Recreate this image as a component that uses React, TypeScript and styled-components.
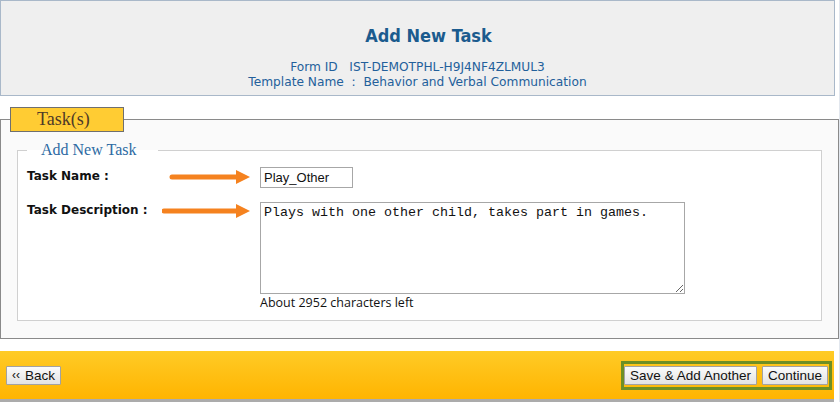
import React from "react";
import styled, { createGlobalStyle } from "styled-components";

const Global = createGlobalStyle`
  html, body { margin: 0; padding: 0; background: #ffffff; }
  #root { width: 840px; }
`;

const Page = styled.div`
  width: 840px;
  height: 402px;
  box-sizing: border-box;
  border-right: 1px solid #e2e7ee;
  overflow: hidden;
  font-family: "DejaVu Sans", Verdana, sans-serif;
`;

const Header = styled.header`
  width: 835px;
  height: 96px;
  box-sizing: border-box;
  border: 1px solid #a9b8c9;
  background: #efefef;
  display: flex;
  flex-direction: column;
  align-items: center;
  padding-top: 24px;
  color: #23609b;
  font-family: "DejaVu Sans", Verdana, sans-serif;
`;

const Title = styled.h1`
  margin: 0 0 13px 22px;
  font-size: 18px;
  line-height: 22px;
  font-weight: bold;
  color: #1b5b8e;
  font-family: "DejaVu Sans Condensed", "DejaVu Sans", sans-serif;
`;

const InfoLine = styled.div`
  font-size: 12.2px;
  line-height: 15px;
  white-space: pre;
`;

const OuterSet = styled.fieldset`
  width: 839px;
  box-sizing: border-box;
  margin: 11px 0 0 0;
  padding: 8px 16px 17px 16px;
  border: 1px solid #8a8a8a;
  background: #fafafa;
  min-width: 0;
`;

const YellowLegend = styled.legend`
  margin-left: -7px;
  padding: 0 0 0 26px;
  width: 114px;
  height: 25px;
  box-sizing: border-box;
  border: 1px solid #6f6f6f;
  background: #ffcc33;
  color: #4e3a28;
  font-family: "Liberation Serif", Georgia, serif;
  font-size: 18px;
  line-height: 23px;
`;

const InnerSet = styled.fieldset`
  margin: 0;
  padding: 7px 0 9px 9px;
  border: 1px solid #d0d0d0;
  background: #ffffff;
  min-width: 0;
`;

const BlueLegend = styled.legend`
  padding: 0 22px 0 14px;
  margin-left: 0;
  color: #2d6aa3;
  font-family: "Liberation Serif", Georgia, serif;
  font-size: 16px;
  line-height: 20px;
`;

const FieldRow = styled.div<{ $gap?: number }>`
  display: grid;
  grid-template-columns: 135px 98px auto;
  align-items: start;
  margin-top: ${(p) => p.$gap ?? 0}px;
`;

const Label = styled.label<{ $top: number }>`
  font-family: "DejaVu Sans", Verdana, sans-serif;
  font-weight: bold;
  font-size: 12px;
  color: #111;
  padding-top: ${(p) => p.$top}px;
  white-space: nowrap;
`;

const ArrowBox = styled.div<{ $top: number }>`
  padding-top: ${(p) => p.$top}px;
  line-height: 0;
`;

const TextInput = styled.input`
  width: 93px;
  height: 21px;
  box-sizing: border-box;
  border: 1px solid #a7a7a7;
  padding: 0 3px;
  margin: 0;
  font-family: "Liberation Sans", Arial, sans-serif;
  font-size: 13px;
  color: #111;
  background: #fff;
`;

const FieldStack = styled.div`
  display: flex;
  flex-direction: column;
`;

const TextArea = styled.textarea`
  width: 425px;
  height: 92px;
  box-sizing: border-box;
  border: 1px solid #a7a7a7;
  padding: 2px 3px;
  margin: 0;
  font-family: "Liberation Mono", "DejaVu Sans Mono", monospace;
  font-size: 13.33px;
  line-height: 16px;
  color: #111;
  resize: both;
  background: #fff;
`;

const Hint = styled.div`
  margin-top: 1px;
  font-family: "Open Sans", Arial, sans-serif;
  font-size: 12.5px;
  line-height: 16px;
  color: #111;
`;

const Footer = styled.footer`
  margin-top: 12px;
  width: 834px;
  height: 51px;
  box-sizing: border-box;
  border-bottom: 3px solid #ababab;
  background: linear-gradient(#ffcb26, #ffb400);
  display: flex;
  align-items: center;
  justify-content: space-between;
  padding: 0 2px 0 6px;
`;

const Button = styled.button`
  height: 19px;
  box-sizing: border-box;
  padding: 0 5px;
  margin: 0;
  border: 1px solid #a2a2a2;
  border-radius: 1px;
  background: linear-gradient(#fbfbfb, #e3e3e3);
  font-family: "Liberation Sans", Arial, sans-serif;
  font-size: 13.5px;
  line-height: 17px;
  color: #111;
  white-space: nowrap;
`;

const Chevrons = styled.span`
  font-size: 12px;
  margin-right: 5px;
  position: relative;
  top: -1px;
`;

const ActionGroup = styled.div`
  display: flex;
  gap: 5px;
  align-items: center;
  border: 3px solid #6e8f25;
  padding: 2px 1px 2px 0;
`;

const Arrow: React.FC<{ from: number }> = ({ from }) => (
  <svg width="98" height="14" viewBox="0 0 98 14">
    <line x1={from + 2} y1="7" x2="76" y2="7" stroke="#f5821f" strokeWidth="5" strokeLinecap="round" />
    <polygon points="74,0 88,7 74,14" fill="#f5821f" />
  </svg>
);

export default function App() {
  return (
    <>
      <Global />
      <Page>
        <Header>
          <Title>Add New Task</Title>
          <InfoLine>{"Form ID   IST-DEMOTPHL-H9J4NF4ZLMUL3"}</InfoLine>
          <InfoLine>{"Template Name  :  Behavior and Verbal Communication"}</InfoLine>
        </Header>
        <OuterSet>
          <YellowLegend>Task(s)</YellowLegend>
          <InnerSet>
            <BlueLegend>Add New Task</BlueLegend>
            <FieldRow $gap={0}>
              <Label $top={2}>Task Name :</Label>
              <ArrowBox $top={3}>
                <Arrow from={8} />
              </ArrowBox>
              <TextInput defaultValue="Play_Other" />
            </FieldRow>
            <FieldRow $gap={14}>
              <Label $top={1}>Task Description :</Label>
              <ArrowBox $top={2}>
                <Arrow from={0} />
              </ArrowBox>
              <FieldStack>
                <TextArea defaultValue="Plays with one other child, takes part in games." />
                <Hint>About 2952 characters left</Hint>
              </FieldStack>
            </FieldRow>
          </InnerSet>
        </OuterSet>
        <Footer>
          <Button>
            <Chevrons>‹‹</Chevrons>Back
          </Button>
          <ActionGroup>
            <Button>Save &amp; Add Another</Button>
            <Button>Continue</Button>
          </ActionGroup>
        </Footer>
      </Page>
    </>
  );
}
